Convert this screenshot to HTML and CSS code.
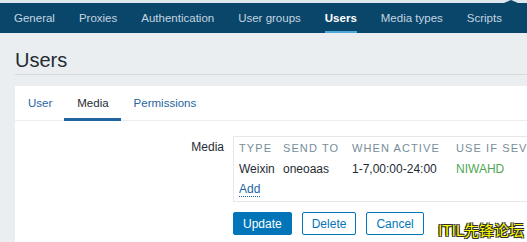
FILE: index.html
```html
<!DOCTYPE html>
<html lang="en">
<head>
  <meta charset="UTF-8" />
  <title>Users</title>
  <link rel="stylesheet" href="styles.css">
</head>
<body>

  <div class="topline"></div>
  <nav class="topnav">
    <a>General</a>
    <a>Proxies</a>
    <a>Authentication</a>
    <a>User groups</a>
    <a class="active">Users</a>
    <a>Media types</a>
    <a>Scripts</a>
  </nav>

  <header class="page-title">
    <h1>Users</h1>
  </header>

  <div class="panel">
    <ul class="tabs">
      <li>User</li>
      <li class="active">Media</li>
      <li>Permissions</li>
    </ul>

    <div class="form-row">
      <label>Media</label>
      <div class="media-box">
        <table class="media-list">
          <colgroup>
            <col style="width:44px">
            <col style="width:69px">
            <col style="width:104px">
            <col style="width:120px">
          </colgroup>
          <tr class="head">
            <th>Type</th>
            <th>Send to</th>
            <th>When active</th>
            <th>Use if severity</th>
          </tr>
          <tr>
            <td>Weixin</td>
            <td>oneoaas</td>
            <td>1-7,00:00-24:00</td>
            <td class="sev">NIWAHD</td>
          </tr>
          <tr>
            <td><a class="link">Add</a></td>
          </tr>
        </table>
      </div>
    </div>

    <div class="buttons">
      <button class="primary">Update</button>
      <button>Delete</button>
      <button>Cancel</button>
    </div>
  </div>

  <div class="watermark">ITIL先锋论坛</div>

</body>
</html>
```

FILE: styles.css
```css
html, body {
  overflow: hidden;
}
body {
  margin: 0;
  background: #ebeef0;
  font-family: "Liberation Sans", Arial, sans-serif;
  font-size: 12px;
  color: #1f2c33;
  height: 242px;
  position: relative;
}
.topline {
  height: 3px;
  background: #dce7ee;
}
.topnav {
  position: relative;
  display: flex;
  gap: 24px;
  height: 30px;
  padding-left: 14px;
  background: #0a466a;
  font-size: 11.5px;
}
.topnav::before {
  content: "";
  position: absolute;
  top: -3px;
  left: 504px;
  border-left: 7px solid transparent;
  border-right: 7px solid transparent;
  border-bottom: 3px solid #0a466a;
}
.topnav a {
  display: flex;
  align-items: center;
  color: #c3d5e0;
  border-bottom: 2px solid transparent;
  padding-top: 1px;
}
.topnav a.active {
  color: #fff;
  font-weight: bold;
  border-bottom-color: #4ea8d8;
}
.page-title {
  margin: 0 0 11px 15px;
  padding: 15px 0 2px;
  border-bottom: 1px solid #d4d9dc;
}
.page-title h1 {
  margin: 0;
  font-size: 20px;
  font-weight: normal;
  line-height: 24px;
  color: #1f2c33;
}
.panel {
  margin-left: 15px;
  background: #fff;
  height: 156px;
  overflow: hidden;
}
.tabs {
  display: flex;
  margin: 0;
  padding: 0;
  list-style: none;
  height: 34px;
  border-bottom: 1px solid #ebeef0;
  font-size: 11.5px;
}
.tabs li {
  display: flex;
  align-items: center;
  padding: 1px 12px 0 13px;
  color: #1f65a0;
  border-bottom: 3px solid transparent;
  margin-bottom: -1px;
}
.tabs li.active {
  color: #1f2c33;
  border-bottom-color: #1f65a0;
}
.form-row {
  display: flex;
  gap: 9px;
  padding-top: 15px;
}
.form-row label {
  flex: none;
  width: 209px;
  text-align: right;
  padding-top: 4px;
}
.media-box {
  flex: none;
  width: 380px;
  border: 1px solid #e4e8eb;
  border-right: none;
  padding: 0 5px 2px;
}
.media-list {
  table-layout: fixed;
  border-collapse: collapse;
  width: 337px;
}
.media-list th,
.media-list td {
  padding: 0;
  text-align: left;
  white-space: nowrap;
  overflow: hidden;
  height: 20px;
}
.media-list .head th {
  height: 22px;
  font-size: 11px;
  font-weight: normal;
  letter-spacing: 1.1px;
  text-transform: uppercase;
  color: #768d99;
}
.media-list .sev {
  color: #4fa755;
}
.link {
  color: #1f65a0;
  border-bottom: 1px dotted #1f65a0;
}
.buttons {
  display: flex;
  gap: 10px;
  margin: 10px 0 0 218px;
}
.buttons button {
  height: 23px;
  padding: 0 9px;
  font-family: inherit;
  font-size: 12px;
  color: #0275b8;
  background: #fff;
  border: 1px solid #0275b8;
  border-radius: 2px;
}
.buttons button.primary {
  color: #fff;
  background: #0275b8;
}
.watermark {
  position: absolute;
  left: 438px;
  top: 221px;
  font-family: "Noto Sans CJK SC", sans-serif;
  font-size: 15px;
  line-height: 18px;
  color: #ffff00;
  text-shadow: 0 0 1px #000, 1px 1px 0 #333, -1px -1px 0 #333, 1px -1px 0 #333, -1px 1px 0 #333;
}
```
